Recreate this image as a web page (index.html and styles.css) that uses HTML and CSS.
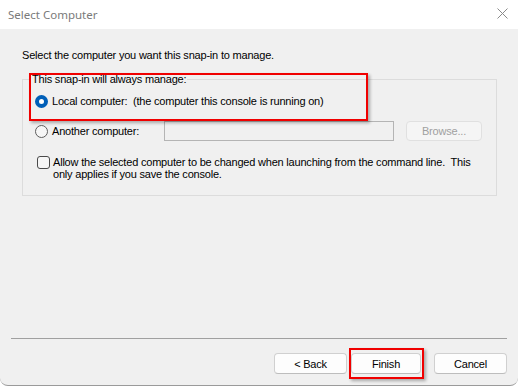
FILE: index.html
```html
<!DOCTYPE html>
<html lang="en">
<head>
    <meta charset="UTF-8">
    <meta name="viewport" content="width=device-width, initial-scale=1.0">
    <title>Select Computer</title>
    <link rel="stylesheet" href="styles.css">
</head>
<body>
    <div class="window">
        <div class="titlebar">
            <span class="title">Select Computer</span>
            <svg class="close" width="11" height="11" viewBox="0 0 11 11">
                <path d="M0.5 0.5 L10.5 10.5 M10.5 0.5 L0.5 10.5" stroke="#8a8a8a" stroke-width="1" fill="none"/>
            </svg>
        </div>
        <div class="content">
            <p class="intro">Select the computer you want this snap-in to manage.</p>
            <fieldset class="group">
                <legend>This snap-in will always manage:</legend>
                <label class="option">
                    <span class="radio checked"></span>
                    <span>Local computer:&nbsp; (the computer this console is running on)</span>
                </label>
                <div class="option-row">
                    <label class="option option-wide">
                        <span class="radio"></span>
                        <span>Another computer:</span>
                    </label>
                    <input type="text" class="computer-name" disabled>
                    <button type="button" class="browse" disabled>Browse...</button>
                </div>
                <label class="check-row">
                    <span class="checkbox"></span>
                    <span>Allow the selected computer to be changed when launching from the command line.&nbsp; This<br>only applies if you save the console.</span>
                </label>
            </fieldset>
            <div class="spacer"></div>
            <div class="separator"></div>
            <div class="buttons">
                <button type="button" class="btn">&lt; Back</button>
                <button type="button" class="btn btn-finish">Finish</button>
                <button type="button" class="btn btn-cancel">Cancel</button>
            </div>
        </div>
        <!-- red boxes drawn over the screenshot -->
        <div class="highlight highlight-local"></div>
        <div class="highlight highlight-finish"></div>
    </div>
</body>
</html>
```

FILE: styles.css
```css
html {
    background-color: #fff;
}
body {
    margin: 0;
    padding: 0;
    font-family: "Liberation Sans", Arial, sans-serif;
    font-size: 11px;
    letter-spacing: -0.2px;
    color: #000;
}
.window {
    position: relative;
    width: 518px;
    height: 386px;
    box-sizing: border-box;
    display: flex;
    flex-direction: column;
    background-color: #f0f0f0;
    border-bottom: 1px solid #9a9a9a;
    border-radius: 0 0 8px 8px;
    overflow: hidden;
}
.titlebar {
    height: 29px;
    flex-shrink: 0;
    background-color: #fff;
    display: flex;
    align-items: center;
    justify-content: space-between;
    padding: 0 10px 1px 8px;
    box-sizing: border-box;
}
.title {
    font-family: "Noto Sans", "Open Sans", sans-serif;
    font-size: 11.5px;
    letter-spacing: 0;
    color: #7a7a7a;
}
.close {
    margin-top: -1px;
}
.content {
    flex: 1;
    display: flex;
    flex-direction: column;
    padding: 20px 11px 11px 11px;
}
.intro {
    margin: 0 0 0 11px;
    line-height: 13px;
}
.group {
    margin: 11px 10px 0 11px;
    padding: 9px 0 15px 12px;
    border: 1px solid #dcdcdc;
    border-radius: 0;
    min-width: 0;
}
.group legend {
    margin-left: -4px;
    padding: 0 1px;
    line-height: 13px;
}
.option {
    display: flex;
    align-items: center;
    line-height: 13px;
}
.option-wide {
    width: 129px;
    flex-shrink: 0;
}
.radio {
    width: 13px;
    height: 13px;
    box-sizing: border-box;
    border: 1px solid #5d5d5d;
    border-radius: 50%;
    background-color: #f6f6f6;
    margin-right: 4px;
    flex-shrink: 0;
}
.radio.checked {
    border: 4px solid #005fb8;
    background-color: #fff;
}
.option-row {
    display: flex;
    align-items: center;
    margin-top: 13px;
}
.computer-name {
    width: 230px;
    height: 20px;
    box-sizing: border-box;
    margin: 0;
    border: 1px solid #b4b4b4;
    background-color: #f0f0f0;
}
.browse {
    width: 76px;
    height: 20px;
    margin-left: 12px;
    font-family: inherit;
    font-size: 11px;
    letter-spacing: inherit;
    color: #a0a0a0;
    background-color: #f5f5f5;
    border: 1px solid #e0e0e0;
    border-radius: 4px;
    padding: 0;
}
.check-row {
    display: flex;
    align-items: flex-start;
    margin-top: 15px;
    line-height: 12px;
}
.checkbox {
    width: 13px;
    height: 13px;
    box-sizing: border-box;
    border: 1px solid #4a4a4a;
    border-radius: 3px;
    background-color: #f6f6f6;
    margin: 0 3px 0 2px;
    flex-shrink: 0;
}
.spacer {
    flex: 1;
}
.separator {
    height: 0;
    border-top: 1px solid #a0a0a0;
}
.buttons {
    display: flex;
    justify-content: flex-end;
    margin-top: 14px;
}
.btn {
    width: 73px;
    height: 21px;
    padding: 0;
    font-family: inherit;
    font-size: 11px;
    letter-spacing: inherit;
    color: #000;
    background-color: #fdfdfd;
    border: 1px solid #d0d0d0;
    border-bottom-color: #bdbdbd;
    border-radius: 4px;
}
.btn-finish {
    width: 70px;
    margin-left: 4px;
}
.btn-cancel {
    margin-left: 13px;
}
.highlight {
    position: absolute;
    box-sizing: border-box;
    border: 2px solid #f00000;
    box-shadow: 2px 2px 3px rgba(0, 0, 0, 0.3);
}
.highlight-local {
    left: 29px;
    top: 73px;
    width: 339px;
    height: 48px;
}
.highlight-finish {
    left: 349px;
    top: 348px;
    width: 75px;
    height: 31px;
}
```
